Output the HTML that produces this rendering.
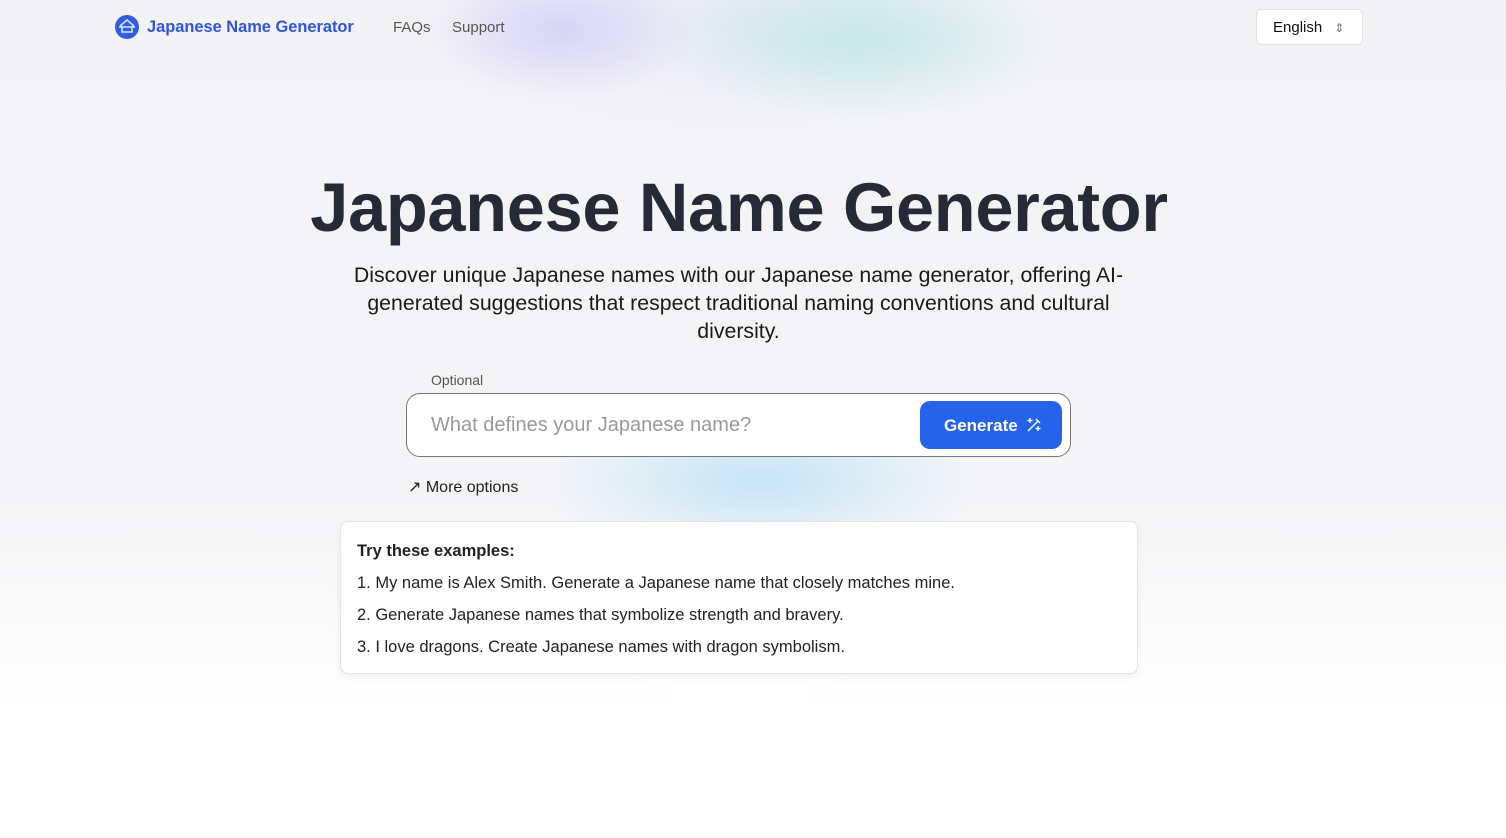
<!DOCTYPE html>
<html><head><meta charset="utf-8"><style>
*{box-sizing:border-box;margin:0;padding:0}
body{width:1506px;height:838px;overflow:hidden;font-family:"Liberation Sans",Arial,sans-serif;background:#f6f6f8;position:relative;color:#111}
.bg{position:absolute;inset:0;background:
radial-gradient(ellipse 140px 70px at 560px 30px,rgba(205,200,245,.7),transparent),
radial-gradient(ellipse 200px 80px at 860px 40px,rgba(180,230,220,.7),transparent),
radial-gradient(ellipse 300px 110px at 740px 20px,rgba(225,228,245,.5),transparent),
radial-gradient(ellipse 220px 80px at 760px 480px,rgba(185,225,245,.8),transparent),
radial-gradient(ellipse 200px 80px at 740px 700px,rgba(255,255,255,1),transparent),
linear-gradient(#f3f3f6 0%,#f5f5f7 60%,#fff 85%);}
.abs{position:absolute}
.logo{left:115px;top:15px;width:24px;height:24px;border-radius:50%;background:#2f5fe0}
.brand{left:147px;top:18px;font-size:16.4px;font-weight:bold;color:#2f55e0}
.nav{top:19px;font-size:15px;color:#555}
.lang{left:1256px;top:9px;width:107px;height:36px;border:1px solid #e2e2e6;border-radius:6px;background:#fff;font-size:15px;padding:9px 16px;color:#111}
h1{position:absolute;left:0;width:1478px;text-align:center;top:168px;font-size:68.5px;font-weight:bold;color:#252a36;letter-spacing:-.3px}
.sub{left:330px;width:817px;top:261px;text-align:center;font-size:21.3px;line-height:28px;color:#1a1a1a}
.opt{left:431px;top:372px;font-size:14px;color:#555}
.inp{left:406px;top:393px;width:665px;height:64px;border:1px solid #777;border-radius:14px;background:#fff}
.ph{left:431px;top:414px;font-size:20px;color:#999}
.btn{left:920px;top:401px;width:142px;height:48px;border-radius:10px;background:#2563eb;color:#fff;font-size:17px;font-weight:bold;padding:15px 0 0 24px}
.more{left:408px;top:477px;font-size:16px;color:#222}
.card{left:340px;top:521px;width:798px;height:153px;background:#fff;border:1px solid #e4e4e8;border-radius:8px;box-shadow:0 3px 8px rgba(0,0,0,.06);padding:20px 16px;font-size:16.5px;color:#222}
.card p{margin-bottom:13px;line-height:19px}
</style></head><body>
<div class="bg"></div>
<div class="abs logo"><svg width="24" height="24" viewBox="0 0 24 24"><path d="M5 11 L12 5 L19 11 M7 11 V17 H17 V11 M4 12 H20" stroke="#dfe7ff" stroke-width="1.5" fill="none"/></svg></div>
<div class="abs brand">Japanese Name Generator</div>
<div class="abs nav" style="left:393px">FAQs</div>
<div class="abs nav" style="left:452px">Support</div>
<div class="abs lang">English <span style="color:#777;font-size:12px;margin-left:8px">⇕</span></div>
<h1>Japanese Name Generator</h1>
<div class="abs sub">Discover unique Japanese names with our Japanese name generator, offering AI-generated suggestions that respect traditional naming conventions and cultural diversity.</div>
<div class="abs opt">Optional</div>
<div class="abs inp"></div>
<div class="abs ph">What defines your Japanese name?</div>
<div class="abs btn">Generate <svg width="16" height="16" viewBox="0 0 16 16" style="vertical-align:-2px;margin-left:4px"><path d="M2 14 L12 4 M10 2 L14 6 M4 1 V6 M1.5 3.5 H6.5 M12 9 V14 M9.5 11.5 H14.5" stroke="#fff" stroke-width="1.4" fill="none"/></svg></div>
<div class="abs more">↗ More options</div>
<div class="abs card">
<p style="font-weight:bold">Try these examples:</p>
<p>1. My name is Alex Smith. Generate a Japanese name that closely matches mine.</p>
<p>2. Generate Japanese names that symbolize strength and bravery.</p>
<p>3. I love dragons. Create Japanese names with dragon symbolism.</p>
</div>
</body></html>
